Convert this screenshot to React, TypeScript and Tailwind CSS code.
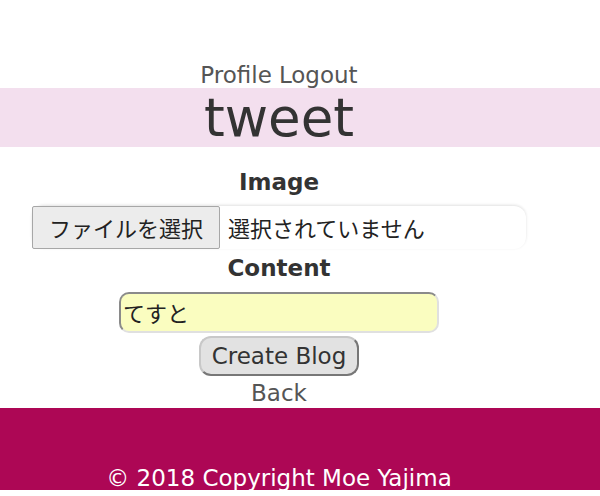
export default function App() {
  return (
    <div className="min-h-[496px] bg-white text-[#333] font-['DejaVu_Sans','Noto_Sans_CJK_JP',sans-serif]">
      <header className="w-[558px] h-[88px] flex items-end justify-center">
        <nav className="text-[23px] leading-[26px] text-[#555] flex gap-[7px]">
          <a href="#">Profile</a>
          <a href="#">Logout</a>
        </nav>
      </header>

      <div className="h-[59px] bg-[#f3dfee]">
        <h1 className="w-[558px] text-center text-[53px] leading-[59px] text-[#333]">tweet</h1>
      </div>

      <form className="w-[558px] flex flex-col items-center">
        <label className="mt-[23px] text-[23px] leading-[24px] font-bold">Image</label>
        <div className="mt-[12px] w-[494px] h-[43px] rounded-xl shadow-[0_-1px_3px_rgba(0,0,0,0.12)] flex items-center">
          <span className="h-[43px] w-[188px] flex items-center justify-center border border-[#a7a7a7] rounded-[2px] bg-[#ececec] text-[22px] text-[#222] font-['Noto_Sans_CJK_JP',sans-serif]">
            ファイルを選択
          </span>
          <span className="ml-[8px] text-[22px] text-[#222] font-['Noto_Sans_CJK_JP',sans-serif]">選択されていません</span>
        </div>

        <label className="mt-[7px] text-[23px] leading-[24px] font-bold">Content</label>
        <div className="mt-[12px] w-[320px] h-[41px] rounded-[10px] bg-[#fafdc0] border-2 border-[#8a8a8a] border-r-[#e0e0e0] border-b-[#e0e0e0] flex items-center pl-[2px] text-[22px] text-[#222] font-['Noto_Sans_CJK_JP',sans-serif]">
          てすと
        </div>

        <button
          type="button"
          className="mt-[3px] w-[160px] h-[40px] rounded-[12px] bg-[#e2e2e2] border-2 border-[#c8c8c8] border-r-[#777] border-b-[#777] text-[23px] text-[#333]"
        >
          Create Blog
        </button>

        <a href="#" className="mt-[5px] text-[23px] leading-[24px] text-[#555]">Back</a>
      </form>

      <footer className="mt-[3px] h-[82px] bg-[#ad0755] flex items-end">
        <p className="w-[558px] text-center text-[23px] leading-[24px] text-white">© 2018 Copyright Moe Yajima</p>
      </footer>
    </div>
  );
}
